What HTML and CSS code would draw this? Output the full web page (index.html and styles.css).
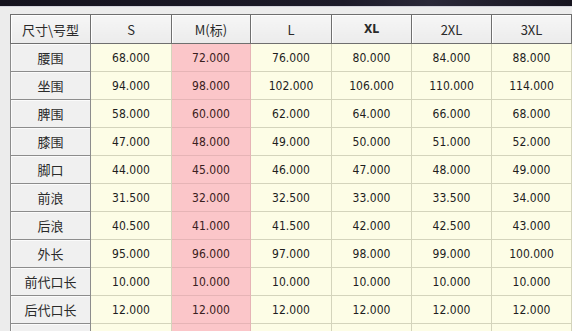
FILE: index.html
```html
<!DOCTYPE html>
<html lang="zh">
<head>
<meta charset="utf-8">
<link rel="stylesheet" href="styles.css">
</head>
<body>
<div class="titlebar"></div>
<div class="pane">
<table class="grid">
<colgroup><col class="c0"><col class="c1"><col class="c2"><col class="c3"><col class="c4"><col class="c5"><col class="c6"></colgroup>
<thead>
<tr><th>尺寸\号型</th><th>S</th><th>M(标)</th><th>L</th><th class="sel">XL</th><th>2XL</th><th>3XL</th></tr>
</thead>
<tbody>
<tr><th>腰围</th><td>68.000</td><td class="m">72.000</td><td>76.000</td><td>80.000</td><td>84.000</td><td>88.000</td></tr>
<tr><th>坐围</th><td>94.000</td><td class="m">98.000</td><td>102.000</td><td>106.000</td><td>110.000</td><td>114.000</td></tr>
<tr><th>脾围</th><td>58.000</td><td class="m">60.000</td><td>62.000</td><td>64.000</td><td>66.000</td><td>68.000</td></tr>
<tr><th>膝围</th><td>47.000</td><td class="m">48.000</td><td>49.000</td><td>50.000</td><td>51.000</td><td>52.000</td></tr>
<tr><th>脚口</th><td>44.000</td><td class="m">45.000</td><td>46.000</td><td>47.000</td><td>48.000</td><td>49.000</td></tr>
<tr><th>前浪</th><td>31.500</td><td class="m">32.000</td><td>32.500</td><td>33.000</td><td>33.500</td><td>34.000</td></tr>
<tr><th>后浪</th><td>40.500</td><td class="m">41.000</td><td>41.500</td><td>42.000</td><td>42.500</td><td>43.000</td></tr>
<tr><th>外长</th><td>95.000</td><td class="m">96.000</td><td>97.000</td><td>98.000</td><td>99.000</td><td>100.000</td></tr>
<tr><th>前代口长</th><td>10.000</td><td class="m">10.000</td><td>10.000</td><td>10.000</td><td>10.000</td><td>10.000</td></tr>
<tr><th>后代口长</th><td>12.000</td><td class="m">12.000</td><td>12.000</td><td>12.000</td><td>12.000</td><td>12.000</td></tr>
<tr><th></th><td></td><td class="m"></td><td></td><td></td><td></td><td></td></tr>
</tbody>
</table>
</div>
</body>
</html>
```

FILE: styles.css
```css
html, body {
  margin: 0;
  padding: 0;
  width: 572px;
  height: 331px;
  overflow: hidden;
  background: #ececec;
}
.titlebar {
  height: 6px;
  background: linear-gradient(90deg, #14121d 0%, #1c1a28 60%, #2a2838 75%, #16141f 100%);
  border-bottom: 1px solid #d4d4dc;
}
.pane {
  padding: 7px 0 0 10px;
}
.grid {
  border-collapse: collapse;
  table-layout: fixed;
  width: 561px;
  font-family: "DejaVu Sans Condensed", "DejaVu Sans", "Noto Sans CJK SC", sans-serif;
  font-size: 12px;
  color: #1e1e1e;
}
.c0 { width: 80px; }
.c1 { width: 81px; }
.c2 { width: 79px; }
.c3 { width: 81px; }
.c4 { width: 80px; }
.c5 { width: 80px; }
.c6 { width: 80px; }
.grid th, .grid td {
  padding: 0;
  text-align: center;
  vertical-align: middle;
  white-space: nowrap;
  overflow: hidden;
}
.grid thead th {
  height: 28px;
  font-weight: normal;
  color: #2a2a2a;
  background: linear-gradient(#f6f6f6, #ebebeb);
  border: 1px solid #6f6f6f;
  box-shadow: inset 1px 1px 0 #ffffff;
  font-family: "Noto Sans CJK SC", "DejaVu Sans Condensed", sans-serif;
  font-size: 13px;
}
.grid thead th.sel {
  font-weight: bold;
  font-family: "DejaVu Sans Condensed", "DejaVu Sans", sans-serif;
  font-size: 12px;
}
.grid tbody th {
  height: 27px;
  font-weight: normal;
  background: #f0f0f0;
  border: 1px solid #8c8c8c;
  border-top-color: #a8a8a8;
  box-shadow: inset 1px 1px 0 #fbfbfb;
  font-family: "Noto Sans CJK SC", sans-serif;
  font-size: 13px;
  color: #2a2a2a;
}
.grid tbody td {
  height: 27px;
  background: #fdfde6;
  border: 1px solid #d4d4bc;
}
.grid tbody td.m {
  background: #fbc6c9;
  border-color: #e6b4b6;
  color: #3a2020;
}
```
